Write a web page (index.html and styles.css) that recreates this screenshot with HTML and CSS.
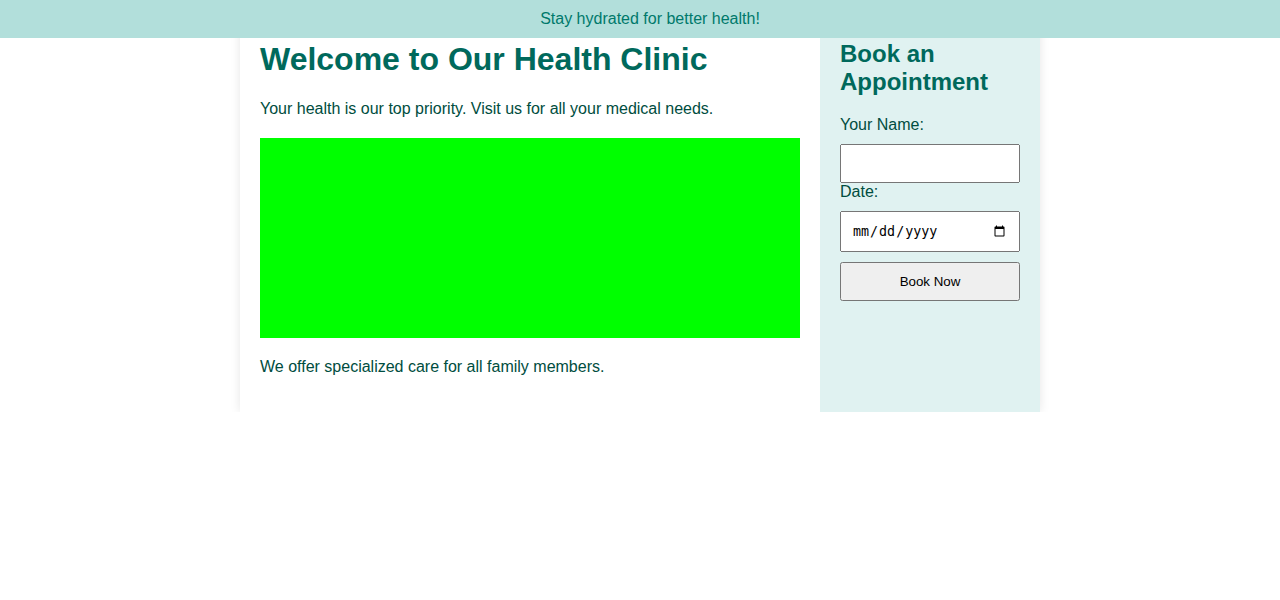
FILE: index.html
```html
<!DOCTYPE html>
<html lang="en">
<head>
<meta charset="UTF-8">
<title>Health Clinic</title>
<link rel="stylesheet" href="styles.css">
</head>
<body>
<div class="banner">Stay hydrated for better health!</div>
<div class="container">
  <main class="main">
    <h1>Welcome to Our Health Clinic</h1>
    <p>Your health is our top priority. Visit us for all your medical needs.</p>
    <div class="hero"></div>
    <p>We offer specialized care for all family members.</p>
  </main>
  <aside class="sidebar">
    <h2>Book an Appointment</h2>
    <form class="form">
      <label class="label" for="name">Your Name:</label>
      <input class="field" type="text" id="name">
      <label class="label" for="date">Date:</label>
      <input class="field" type="date" id="date">
      <button class="btn" type="button">Book Now</button>
    </form>
  </aside>
</div>
</body>
</html>
```
FILE: styles.css
```css
html, body {
  overflow-x: hidden;
}
body {
  margin: 0;
  font-family: "Liberation Sans", Arial, sans-serif;
  color: #004d40;
  background: #ffffff;
}
.banner {
  position: fixed;
  top: 0;
  left: 0;
  width: 100%;
  padding: 10px;
  text-align: center;
  background: #b2dfdb;
  color: #00796b;
  font-size: 16px;
  z-index: 10;
}
.container {
  width: 800px;
  margin: 0 auto;
  display: flex;
  background: #ffffff;
  box-shadow: 0 0 10px rgba(0, 0, 0, 0.1);
}
.main {
  flex: 1;
  padding: 20px;
}
.main h1 {
  font-size: 32px;
  color: #00695c;
  margin: 0.67em 0;
}
.main p {
  margin: 16px 0;
}
.hero {
  height: 200px;
  background: #00ff00;
  margin: 20px 0;
}
.sidebar {
  width: 180px;
  padding: 20px;
  background: #e0f2f1;
}
.sidebar h2 {
  font-size: 24px;
  color: #00695c;
  margin: 0.83em 0;
}
.form {
  display: flex;
  flex-direction: column;
}
.label {
  display: block;
  margin-bottom: 10px;
}
.field {
  box-sizing: border-box;
  width: 100%;
  padding: 10px;
  margin: 0;
}
.btn {
  box-sizing: border-box;
  width: 100%;
  padding: 10px;
  margin-top: 10px;
}
```
